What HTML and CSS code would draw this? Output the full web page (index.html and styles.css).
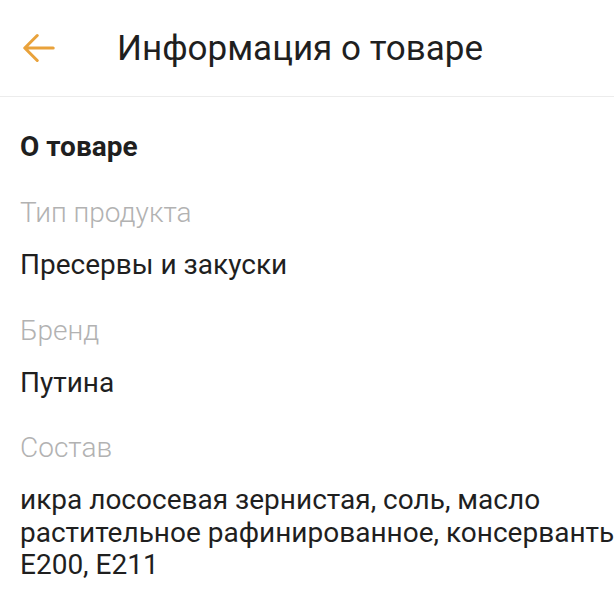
FILE: index.html
```html
<!DOCTYPE html>
<html lang="ru">
<head>
    <meta charset="UTF-8">
    <meta name="viewport" content="width=device-width, initial-scale=1.0">
    <title>Информация о товаре</title>
    <link rel="stylesheet" href="styles.css">
</head>
<body>
    <div class="header">
        <button class="back" aria-label="Назад">
            <svg width="32" height="32" viewBox="3 3 18 18">
                <path d="M20 12H4.5M11 5l-7 7 7 7" fill="none" stroke="#e9a23b" stroke-width="1.7" stroke-linecap="round" stroke-linejoin="round"/>
            </svg>
        </button>
        <h1>Информация о товаре</h1>
    </div>
    <div class="content">
        <h2>О товаре</h2>
        <div class="field">
            <div class="label">Тип продукта</div>
            <div class="value">Пресервы и закуски</div>
        </div>
        <div class="field">
            <div class="label">Бренд</div>
            <div class="value">Путина</div>
        </div>
        <div class="field">
            <div class="label">Состав</div>
            <div class="value">икра лососевая зернистая, соль, масло растительное рафинированное, консерванты, Е200, Е211</div>
        </div>
    </div>
</body>
</html>
```

FILE: styles.css
```css
body {
    font-family: Roboto, "Noto Sans", sans-serif;
    margin: 0;
    padding: 0;
    background: #fff;
    color: #1f1f1f;
    overflow: hidden;
}
.header {
    display: flex;
    align-items: center;
    height: 96px;
    border-bottom: 1px solid #ececec;
}
.back {
    display: flex;
    align-items: center;
    justify-content: center;
    margin-left: 23px;
    padding: 0;
    width: 32px;
    height: 32px;
    background: none;
    border: none;
}
.header h1 {
    margin: 0 0 0 62px;
    font-size: 35px;
    font-weight: 400;
    color: #1f1f1f;
}
.content {
    width: 640px;
    padding: 34px 20px 0;
}
.content h2 {
    margin: 0 0 34px;
    font-size: 28px;
    line-height: 32px;
    font-weight: 700;
}
.field {
    margin-bottom: 33px;
}
.label {
    font-size: 28px;
    line-height: 32px;
    font-weight: 300;
    color: #b2b2b2;
    margin-bottom: 20px;
}
.value {
    font-size: 28px;
    line-height: 32.5px;
    color: #1f1f1f;
}
```
